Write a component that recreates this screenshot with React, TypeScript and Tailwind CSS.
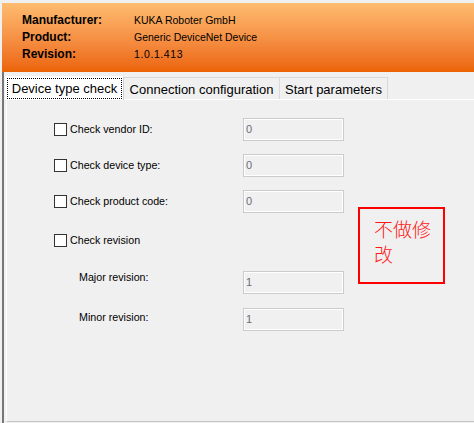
import { ReactNode } from "react";

type FieldRowProps = {
    label: string,
    value: string,
    checkbox?: boolean,
    indent?: boolean,
    className?: string,
    labelClassName?: string,
}

function FieldRow({ label, value, checkbox, indent, className, labelClassName }: FieldRowProps): JSX.Element {
    return (
        <div className={`flex h-[23px] items-center ${className ?? ""}`}>
            <div className={`flex w-[189px] items-center ${indent ? "self-start pl-[25px]" : ""}`}>
                {checkbox && <span className="mr-[3px] h-[13px] w-[13px] border border-[#333333] bg-white" />}
                <span className={`leading-[13px] ${labelClassName ?? ""}`}>{label}</span>
            </div>
            {value !== "" && (
                <div className="flex h-[23px] w-[101px] items-center border border-[#cbcbcb] bg-[#f0f0f0] pl-[2px] text-[11px] text-[#6b6b78] shadow-[inset_0_0_0_1px_#ffffff]">
                    {value}
                </div>
            )}
        </div>
    );
}

function Tab({ children, active, width }: { children: ReactNode, active?: boolean, width: string }): JSX.Element {
    if (active) {
        return (
            <div className={`relative z-10 -mb-px flex h-[24px] ${width} border-l border-r border-t border-l-white border-r-[#cfcfcf] border-t-white bg-white p-[1px]`}>
                <span className="flex flex-1 items-center justify-center border border-dotted border-black leading-[15px]">
                    {children}
                </span>
            </div>
        );
    }
    return (
        <div className={`flex h-[22px] ${width} items-center justify-center border-r border-t border-[#d9d9d9] pt-[2px] leading-[15px]`}>
            {children}
        </div>
    );
}

export default function App(): JSX.Element {
    return (
        <div className="relative h-[423px] w-[474px] overflow-hidden bg-[#f0f0f0] pl-[2px] pt-[3px] font-['Liberation_Sans',sans-serif] text-black">
            <div className="h-[69px] bg-linear-to-b from-[#fdbc6f] to-[#eb6300] pl-[20px] pt-[9px]">
                <div className="grid grid-cols-[112px_1fr] leading-[17px]">
                    <span className="text-[12px] font-bold">Manufacturer:</span>
                    <span className="text-[10.5px]">KUKA Roboter GmbH</span>
                    <span className="text-[12px] font-bold">Product:</span>
                    <span className="text-[10.5px]">Generic DeviceNet Device</span>
                    <span className="text-[12px] font-bold">Revision:</span>
                    <span className="text-[10.5px] tracking-[0.6px]">1.0.1.413</span>
                </div>
            </div>

            <div className="flex h-[351px] flex-col border-l-2 border-[#777777] pt-[4px]">
                <div className="ml-[1px] flex items-end text-[13px]">
                    <Tab active width="w-[119px]">Device type check</Tab>
                    <Tab width="w-[156px]">Connection configuration</Tab>
                    <Tab width="w-[108px]">Start parameters</Tab>
                </div>

                <div className="mb-[1px] ml-[2px] flex flex-1 flex-col border-b border-l border-t border-b-[#c4c4c4] border-l-white border-t-white pl-[47px] text-[10.7px]">
                    <FieldRow className="mt-[18px]" checkbox label="Check vendor ID:" value="0" />
                    <FieldRow className="mt-[13px]" checkbox label="Check device type:" value="0" />
                    <FieldRow className="mt-[13px]" checkbox label="Check product code:" value="0" />
                    <FieldRow className="mt-[16px]" checkbox label="Check revision" value="" />
                    <FieldRow className="mt-[19px]" indent label="Major revision:" value="1" />
                    <FieldRow className="mt-[14px]" indent label="Minor revision:" value="1" labelClassName="pt-[3px] block" />
                </div>
            </div>

            <div className="absolute left-[358px] top-[207px] h-[77px] w-[87px] border-2 border-[#ff0000] pl-[14px] pt-[7px]">
                <p className="w-[60px] font-['Noto_Sans_CJK_SC',sans-serif] text-[19px] font-light leading-[25px] text-[#ff1a1a]">
                    不做修改
                </p>
            </div>
        </div>
    );
}
